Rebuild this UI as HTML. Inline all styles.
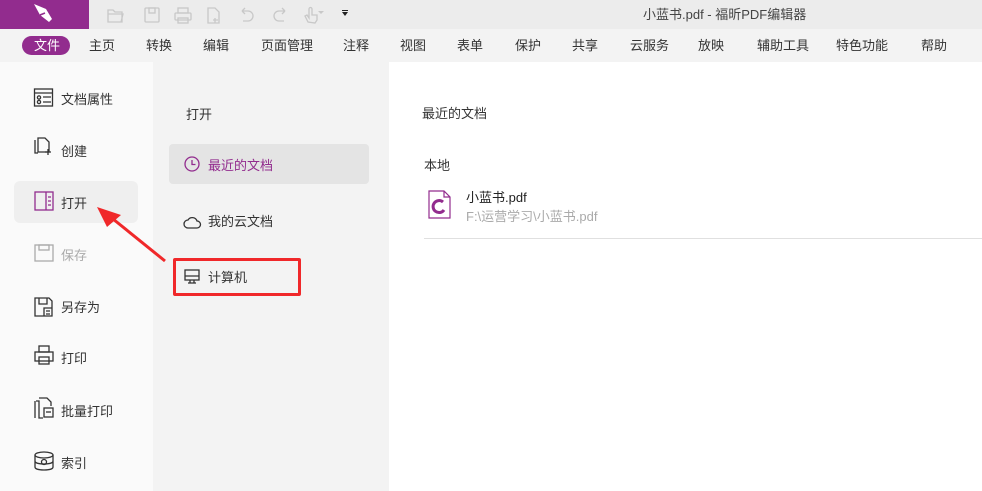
<!DOCTYPE html>
<html><head><meta charset="utf-8"><style>
*{margin:0;padding:0;box-sizing:border-box}
body{width:982px;height:491px;overflow:hidden;position:relative;font-family:"Liberation Sans","Noto Sans CJK SC",sans-serif;font-size:13px;color:#333;background:#fff}
.a{position:absolute;white-space:nowrap}
.mi{position:absolute;top:35px;font-size:13px;color:#333}
svg{position:absolute}
</style></head><body>
<div class="a" style="left:0;top:0;width:982px;height:29px;background:#ececec"></div>
<div class="a" style="left:0;top:0;width:89px;height:29px;background:#922c8e"></div>
<svg style="left:32px;top:3px" width="24" height="22" viewBox="0 0 24 22"><path d="M2 1 L14 6 L20 16 L17 19 L8 12 Z" fill="#fff"/><path d="M8 12 L13 10" stroke="#922c8e" stroke-width="1.5"/></svg>
<svg style="left:105px;top:5px" width="250" height="20" viewBox="0 0 250 20" fill="none" stroke="#c8c8c8" stroke-width="1.3">
<path d="M3 5h5l2 2h7v10H3z M3 9h15l-2 8"/>
<rect x="40" y="3" width="14" height="14" rx="1"/><rect x="44" y="3" width="6" height="5"/>
<rect x="70" y="8" width="16" height="7" rx="1"/><rect x="73" y="3" width="10" height="5"/><rect x="73" y="13" width="10" height="5"/>
<path d="M103 3h7l4 4v11h-11z M110 13v5 M108 15h5"/>
<path d="M137 6h6a5 5 0 0 1 0 10h-5 M137 6l3-3 M137 6l3 3"/>
<path d="M180 6h-6a5 5 0 0 0 0 10h5 M180 6l-3-3 M180 6l-3 3"/>
<path d="M203 17l-3-6 2-1 2 3V4a1.5 1.5 0 0 1 3 0v6h5v5l-2 3z"/>
</svg>
<div class="a" style="left:318px;top:11px;width:0;height:0;border-left:3px solid transparent;border-right:3px solid transparent;border-top:3px solid #c8c8c8"></div>
<div class="a" style="left:342px;top:10px;width:6px;height:1px;background:#222"></div>
<div class="a" style="left:342px;top:12px;width:0;height:0;border-left:3px solid transparent;border-right:3px solid transparent;border-top:4px solid #222"></div>
<div class="a" style="left:643px;top:4px;font-size:13px;color:#444">小蓝书.pdf - 福昕PDF编辑器</div>
<div class="a" style="left:0;top:29px;width:982px;height:33px;background:#f3f3f3"></div>
<div class="a" style="left:22px;top:36px;width:48px;height:19px;border-radius:10px;background:#922c8e"></div>
<div class="mi" style="left:34px;color:#fff">文件</div>
<div class="mi" style="left:89px">主页</div>
<div class="mi" style="left:146px">转换</div>
<div class="mi" style="left:203px">编辑</div>
<div class="mi" style="left:261px">页面管理</div>
<div class="mi" style="left:343px">注释</div>
<div class="mi" style="left:400px">视图</div>
<div class="mi" style="left:457px">表单</div>
<div class="mi" style="left:515px">保护</div>
<div class="mi" style="left:572px">共享</div>
<div class="mi" style="left:630px">云服务</div>
<div class="mi" style="left:698px">放映</div>
<div class="mi" style="left:757px">辅助工具</div>
<div class="mi" style="left:836px">特色功能</div>
<div class="mi" style="left:921px">帮助</div>
<div class="a" style="left:0;top:62px;width:153px;height:429px;background:#fafafa"></div>
<div class="a" style="left:153px;top:62px;width:236px;height:429px;background:#f3f3f3"></div>
<div class="a" style="left:14px;top:181px;width:124px;height:42px;border-radius:6px;background:#efefef"></div>
<svg style="left:33px;top:87px" width="22" height="390" viewBox="0 0 22 390" fill="none" stroke="#333" stroke-width="1.3">
<rect x="1.5" y="2" width="18" height="17"/><path d="M1.5 6h18 M10 10h8 M10 15h8"/><circle cx="6" cy="10.5" r="1.6"/><circle cx="6" cy="15" r="1.6"/>
<path d="M5 51h7l4 4v10H5z M2 53v13h3"/><path d="M12 65h6 M15 62v6"/>
<rect x="2" y="105" width="18" height="18" stroke="#922c8e"/><path d="M13 105v18 M15 110h3 M15 114h3 M15 118h3" stroke="#922c8e"/>
<rect x="2" y="158" width="18" height="16" stroke="#aaa"/><rect x="6" y="158" width="10" height="5" stroke="#aaa"/>
<path d="M2 211h14l3 3v15H2z M6 211v6h8v-6 M11 221h8v8h-8z M13 224h4 M13 227h4"/>
<rect x="2" y="265" width="18" height="9"/><rect x="6" y="259" width="10" height="6"/><rect x="6" y="270" width="10" height="7"/>
<path d="M6 311h8l4 4v4 M3 314h3v17h4 M2 314v17"/><rect x="11" y="321" width="9" height="9"/><path d="M13 325h5"/>
<ellipse cx="11" cy="368" rx="9" ry="3"/><path d="M2 368v12c0 2 4 3 9 3s9-1 9-3v-12 M2 374c0 2 4 3 9 3s9-1 9-3"/><circle cx="11" cy="375" r="2.5"/>
</svg>
<div class="a" style="left:61px;top:89px">文档属性</div>
<div class="a" style="left:61px;top:141px">创建</div>
<div class="a" style="left:61px;top:193px">打开</div>
<div class="a" style="left:61px;top:245px;color:#aaa">保存</div>
<div class="a" style="left:61px;top:297px">另存为</div>
<div class="a" style="left:61px;top:348px">打印</div>
<div class="a" style="left:61px;top:401px">批量打印</div>
<div class="a" style="left:61px;top:453px">索引</div>
<div class="a" style="left:186px;top:104px">打开</div>
<div class="a" style="left:169px;top:144px;width:200px;height:40px;border-radius:4px;background:#e4e4e4"></div>
<svg style="left:183px;top:155px" width="20" height="140" viewBox="0 0 20 140" fill="none" stroke-width="1.3">
<circle cx="9" cy="9" r="7" stroke="#922c8e"/><path d="M9 5v4.5h3.5" stroke="#922c8e"/>
<path d="M5 73h9a3.5 3.5 0 0 0 0-7 5 5 0 0 0-9-1 4 4 0 0 0 0 8z" stroke="#333"/>
<rect x="2" y="115" width="14" height="10" stroke="#333"/><path d="M2 121h14 M7 125v3 M11 125v3 M5 128h8" stroke="#333"/>
</svg>
<div class="a" style="left:208px;top:155px;color:#922c8e">最近的文档</div>
<div class="a" style="left:208px;top:211px">我的云文档</div>
<div class="a" style="left:208px;top:267px">计算机</div>
<div class="a" style="left:173px;top:258px;width:128px;height:38px;border:3px solid #f0282a;border-radius:2px"></div>
<svg style="left:95px;top:205px" width="75" height="60" viewBox="0 0 75 60"><path d="M70 56 L18 14" stroke="#f0282a" stroke-width="3"/><path d="M2 2 L26 10 L12 22 Z" fill="#f0282a"/></svg>
<div class="a" style="left:422px;top:103px">最近的文档</div>
<div class="a" style="left:424px;top:155px">本地</div>
<svg style="left:428px;top:190px" width="24" height="30" viewBox="0 0 24 30"><path d="M1 1h15l6 6v21H1z M16 1v6h6" fill="#fff" stroke="#922c8e" stroke-width="1.2"/><path d="M15 12a6 6 0 1 0 1 8" fill="none" stroke="#922c8e" stroke-width="3"/></svg>
<div class="a" style="left:466px;top:187px;color:#222">小蓝书.pdf</div>
<div class="a" style="left:466px;top:206px;color:#aaa">F:\运营学习\小蓝书.pdf</div>
<div class="a" style="left:424px;top:238px;width:558px;height:1px;background:#e0e0e0"></div>
</body></html>
